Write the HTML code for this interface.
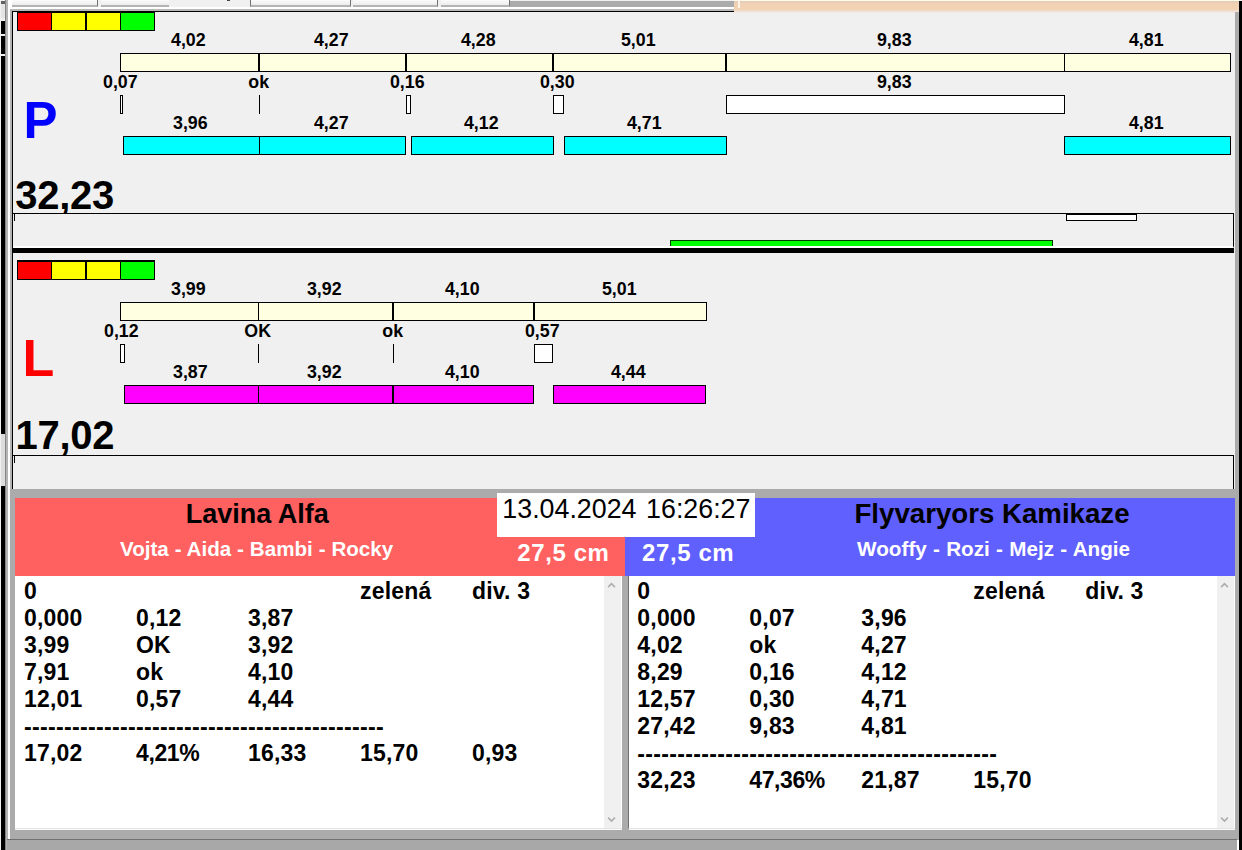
<!DOCTYPE html>
<html><head><meta charset="utf-8"><title>Flyball</title>
<style>
html,body{margin:0;padding:0;}
body{width:1242px;height:850px;overflow:hidden;background:#f0f0f0;position:relative;font-family:"Liberation Sans",sans-serif;}
#root{position:absolute;left:0;top:0;width:1242px;height:850px;overflow:hidden;background:#f0f0f0;}
#root div,#root span{position:absolute;box-sizing:border-box;}
</style></head><body><div id="root">

<div style="left:12px;top:0;width:86px;height:7px;background:linear-gradient(to bottom,#fbfbfb,#ececec);border-bottom:2px solid #b4b4b4;border-right:1px solid #707070;"></div>
<div style="left:101px;top:0;width:68px;height:7px;background:linear-gradient(to bottom,#fbfbfb,#ececec);border-bottom:2px solid #b4b4b4;"></div>
<div style="left:250px;top:0;width:101px;height:7px;background:linear-gradient(to bottom,#fbfbfb,#ececec);border-bottom:2px solid #b4b4b4;border-left:1px solid #707070;border-right:1px solid #707070;"></div>
<div style="left:353px;top:0;width:85px;height:7px;background:linear-gradient(to bottom,#fbfbfb,#ececec);border-bottom:2px solid #b4b4b4;border-right:1px solid #707070;"></div>
<div style="left:441px;top:0;width:69px;height:7px;background:linear-gradient(to bottom,#fbfbfb,#ececec);border-bottom:2px solid #b4b4b4;border-right:1px solid #707070;"></div>
<div style="left:227px;top:0;width:3px;height:1px;background:#404040"></div>
<div style="left:510px;top:1px;width:224px;height:6px;background:#ababab"></div>
<div style="left:12px;top:7px;width:722px;height:2px;background:#fff"></div>
<div style="left:12px;top:9px;width:722px;height:2px;background:#b8b8b8"></div>
<div style="left:12px;top:11px;width:722px;height:1px;background:#000"></div>
<div style="left:734px;top:0;width:505px;height:13px;background:linear-gradient(to bottom,#fffbea 0,#fffbea 1px,#e6ccb8 1px,#ebcfb6 3px,#f2d2b3 5px,#f2d2b3 9px,#f1dccb 11px,#f0f0f0 13px)"></div>
<div style="left:738px;top:0;width:2px;height:8px;background:#fdf3e6"></div>
<div style="left:1px;top:21px;width:4px;height:829px;background:#000"></div>
<div style="left:1px;top:1px;width:4px;height:3px;background:#606060"></div>
<div style="left:1px;top:4px;width:4px;height:14px;background:#e4e4e4"></div>
<div style="left:1px;top:434px;width:4px;height:52px;background:#dcdcdc"></div>
<div style="left:1px;top:34px;width:4px;height:2px;background:#f0f0f0"></div>
<div style="left:1px;top:54px;width:4px;height:2px;background:#f0f0f0"></div>
<div style="left:5px;top:0;width:3px;height:850px;background:#b4b4b4;border-left:1px solid #858585"></div>
<div style="left:8px;top:0;width:4px;height:850px;background:#fff"></div>
<div style="left:10px;top:9px;width:2px;height:480px;background:#b4b4b4"></div>
<div style="left:12px;top:11px;width:1px;height:478px;background:#000"></div>
<div style="left:1235px;top:12px;width:4px;height:838px;background:#ababab"></div>
<div style="left:1239px;top:1px;width:3px;height:849px;background:#000"></div>
<div style="left:17px;top:11px;width:35px;height:20px;background:#ff0000;border:1px solid #000;"></div>
<div style="left:17px;top:12px;width:35px;height:1px;background:#000"></div>
<div style="left:51px;top:11px;width:35px;height:20px;background:#ffff00;border:1px solid #000;"></div>
<div style="left:51px;top:12px;width:35px;height:1px;background:#000"></div>
<div style="left:86px;top:11px;width:35px;height:20px;background:#ffff00;border:1px solid #000;"></div>
<div style="left:86px;top:12px;width:35px;height:1px;background:#000"></div>
<div style="left:120px;top:11px;width:35px;height:20px;background:#00ff00;border:1px solid #000;"></div>
<div style="left:120px;top:12px;width:35px;height:1px;background:#000"></div>
<div style="left:120px;top:53px;width:139px;height:19px;background:#ffffe1;border:1px solid #000;"></div>
<span style="top:29.93px;font-size:17.8px;line-height:21px;font-weight:bold;color:#000;white-space:pre;left:-11.699999999999989px;width:400px;text-align:center;">4,02</span>
<div style="left:259px;top:53px;width:147px;height:19px;background:#ffffe1;border:1px solid #000;"></div>
<span style="top:29.93px;font-size:17.8px;line-height:21px;font-weight:bold;color:#000;white-space:pre;left:131.3px;width:400px;text-align:center;">4,27</span>
<div style="left:406px;top:53px;width:147px;height:19px;background:#ffffe1;border:1px solid #000;"></div>
<span style="top:29.93px;font-size:17.8px;line-height:21px;font-weight:bold;color:#000;white-space:pre;left:278.3px;width:400px;text-align:center;">4,28</span>
<div style="left:553px;top:53px;width:173px;height:19px;background:#ffffe1;border:1px solid #000;"></div>
<span style="top:29.93px;font-size:17.8px;line-height:21px;font-weight:bold;color:#000;white-space:pre;left:438.29999999999995px;width:400px;text-align:center;">5,01</span>
<div style="left:726px;top:53px;width:339px;height:19px;background:#ffffe1;border:1px solid #000;"></div>
<span style="top:29.93px;font-size:17.8px;line-height:21px;font-weight:bold;color:#000;white-space:pre;left:694.3px;width:400px;text-align:center;">9,83</span>
<div style="left:1064px;top:53px;width:167px;height:19px;background:#ffffe1;border:1px solid #000;"></div>
<span style="top:29.93px;font-size:17.8px;line-height:21px;font-weight:bold;color:#000;white-space:pre;left:946.3px;width:400px;text-align:center;">4,81</span>
<div style="left:120px;top:95px;width:3px;height:19px;background:#fff;border:1px solid #000;"></div>
<span style="top:71.93px;font-size:17.8px;line-height:21px;font-weight:bold;color:#000;white-space:pre;left:-79.7px;width:400px;text-align:center;">0,07</span>
<div style="left:259px;top:95px;width:1px;height:19px;background:#000"></div>
<span style="top:71.93px;font-size:17.8px;line-height:21px;font-weight:bold;color:#000;white-space:pre;left:58.69999999999999px;width:400px;text-align:center;">ok</span>
<div style="left:406px;top:95px;width:5px;height:19px;background:#fff;border:1px solid #000;"></div>
<span style="top:71.93px;font-size:17.8px;line-height:21px;font-weight:bold;color:#000;white-space:pre;left:207.3px;width:400px;text-align:center;">0,16</span>
<div style="left:553px;top:95px;width:11px;height:19px;background:#fff;border:1px solid #000;"></div>
<span style="top:71.93px;font-size:17.8px;line-height:21px;font-weight:bold;color:#000;white-space:pre;left:357.29999999999995px;width:400px;text-align:center;">0,30</span>
<div style="left:726px;top:95px;width:339px;height:19px;background:#fff;border:1px solid #000;"></div>
<span style="top:71.93px;font-size:17.8px;line-height:21px;font-weight:bold;color:#000;white-space:pre;left:694.3px;width:400px;text-align:center;">9,83</span>
<div style="left:123px;top:136px;width:137px;height:19px;background:#00ffff;border:1px solid #000;"></div>
<span style="top:112.93px;font-size:17.8px;line-height:21px;font-weight:bold;color:#000;white-space:pre;left:-9.699999999999989px;width:400px;text-align:center;">3,96</span>
<div style="left:259px;top:136px;width:147px;height:19px;background:#00ffff;border:1px solid #000;"></div>
<span style="top:112.93px;font-size:17.8px;line-height:21px;font-weight:bold;color:#000;white-space:pre;left:131.3px;width:400px;text-align:center;">4,27</span>
<div style="left:411px;top:136px;width:143px;height:19px;background:#00ffff;border:1px solid #000;"></div>
<span style="top:112.93px;font-size:17.8px;line-height:21px;font-weight:bold;color:#000;white-space:pre;left:281.3px;width:400px;text-align:center;">4,12</span>
<div style="left:564px;top:136px;width:163px;height:19px;background:#00ffff;border:1px solid #000;"></div>
<span style="top:112.93px;font-size:17.8px;line-height:21px;font-weight:bold;color:#000;white-space:pre;left:444.29999999999995px;width:400px;text-align:center;">4,71</span>
<div style="left:1064px;top:136px;width:167px;height:19px;background:#00ffff;border:1px solid #000;"></div>
<span style="top:112.93px;font-size:17.8px;line-height:21px;font-weight:bold;color:#000;white-space:pre;left:946.3px;width:400px;text-align:center;">4,81</span>
<span style="top:89.52px;font-size:51px;line-height:61px;font-weight:bold;color:#0000ff;white-space:pre;left:23.5px;">P</span>
<span style="top:170.93px;font-size:40px;line-height:48px;font-weight:bold;color:#000;white-space:pre;letter-spacing:-0.3px;left:15.3px;">32,23</span>
<div style="left:13px;top:213px;width:1221px;height:35px;background:#f0f0f0;border-top:1px solid #000;border-right:1px solid #000;border-bottom:2px solid #fff"></div>
<div style="left:14px;top:213px;width:1px;height:8px;background:#000"></div>
<div style="left:1066px;top:213px;width:71px;height:8px;background:#fff;border:1px solid #000;"></div>
<div style="left:1066px;top:214px;width:71px;height:1px;background:#000"></div>
<div style="left:670px;top:240px;width:383px;height:6px;background:#00ff00;border-top:1px solid #003800;border-left:1px solid #003800;border-right:1px solid #003800"></div>
<div style="left:13px;top:248px;width:1221px;height:5px;background:#000"></div>
<div style="left:17px;top:260px;width:35px;height:20px;background:#ff0000;border:1px solid #000;"></div>
<div style="left:17px;top:261px;width:35px;height:1px;background:#000"></div>
<div style="left:51px;top:260px;width:35px;height:20px;background:#ffff00;border:1px solid #000;"></div>
<div style="left:51px;top:261px;width:35px;height:1px;background:#000"></div>
<div style="left:86px;top:260px;width:35px;height:20px;background:#ffff00;border:1px solid #000;"></div>
<div style="left:86px;top:261px;width:35px;height:1px;background:#000"></div>
<div style="left:120px;top:260px;width:35px;height:20px;background:#00ff00;border:1px solid #000;"></div>
<div style="left:120px;top:261px;width:35px;height:1px;background:#000"></div>
<div style="left:120px;top:302px;width:139px;height:19px;background:#ffffe1;border:1px solid #000;"></div>
<span style="top:278.93px;font-size:17.8px;line-height:21px;font-weight:bold;color:#000;white-space:pre;left:-11.699999999999989px;width:400px;text-align:center;">3,99</span>
<div style="left:258px;top:302px;width:135px;height:19px;background:#ffffe1;border:1px solid #000;"></div>
<span style="top:278.93px;font-size:17.8px;line-height:21px;font-weight:bold;color:#000;white-space:pre;left:124.30000000000001px;width:400px;text-align:center;">3,92</span>
<div style="left:393px;top:302px;width:141px;height:19px;background:#ffffe1;border:1px solid #000;"></div>
<span style="top:278.93px;font-size:17.8px;line-height:21px;font-weight:bold;color:#000;white-space:pre;left:262.3px;width:400px;text-align:center;">4,10</span>
<div style="left:534px;top:302px;width:173px;height:19px;background:#ffffe1;border:1px solid #000;"></div>
<span style="top:278.93px;font-size:17.8px;line-height:21px;font-weight:bold;color:#000;white-space:pre;left:419.29999999999995px;width:400px;text-align:center;">5,01</span>
<div style="left:120px;top:344px;width:5px;height:19px;background:#fff;border:1px solid #000;"></div>
<span style="top:320.93px;font-size:17.8px;line-height:21px;font-weight:bold;color:#000;white-space:pre;left:-78.7px;width:400px;text-align:center;">0,12</span>
<div style="left:258px;top:344px;width:1px;height:19px;background:#000"></div>
<span style="top:320.93px;font-size:17.8px;line-height:21px;font-weight:bold;color:#000;white-space:pre;left:57.69999999999999px;width:400px;text-align:center;">OK</span>
<div style="left:393px;top:344px;width:1px;height:19px;background:#000"></div>
<span style="top:320.93px;font-size:17.8px;line-height:21px;font-weight:bold;color:#000;white-space:pre;left:192.7px;width:400px;text-align:center;">ok</span>
<div style="left:534px;top:344px;width:19px;height:19px;background:#fff;border:1px solid #000;"></div>
<span style="top:320.93px;font-size:17.8px;line-height:21px;font-weight:bold;color:#000;white-space:pre;left:342.29999999999995px;width:400px;text-align:center;">0,57</span>
<div style="left:124px;top:385px;width:135px;height:19px;background:#ff00ff;border:1px solid #000;"></div>
<span style="top:361.93px;font-size:17.8px;line-height:21px;font-weight:bold;color:#000;white-space:pre;left:-9.699999999999989px;width:400px;text-align:center;">3,87</span>
<div style="left:258px;top:385px;width:135px;height:19px;background:#ff00ff;border:1px solid #000;"></div>
<span style="top:361.93px;font-size:17.8px;line-height:21px;font-weight:bold;color:#000;white-space:pre;left:124.30000000000001px;width:400px;text-align:center;">3,92</span>
<div style="left:393px;top:385px;width:141px;height:19px;background:#ff00ff;border:1px solid #000;"></div>
<span style="top:361.93px;font-size:17.8px;line-height:21px;font-weight:bold;color:#000;white-space:pre;left:262.3px;width:400px;text-align:center;">4,10</span>
<div style="left:553px;top:385px;width:153px;height:19px;background:#ff00ff;border:1px solid #000;"></div>
<span style="top:361.93px;font-size:17.8px;line-height:21px;font-weight:bold;color:#000;white-space:pre;left:428.29999999999995px;width:400px;text-align:center;">4,44</span>
<span style="top:326.97px;font-size:52px;line-height:62px;font-weight:bold;color:#ff0000;white-space:pre;left:22.5px;">L</span>
<span style="top:410.93px;font-size:40px;line-height:48px;font-weight:bold;color:#000;white-space:pre;letter-spacing:-0.3px;left:15.5px;">17,02</span>
<div style="left:13px;top:455px;width:1221px;height:34px;background:#f0f0f0;border-top:1px solid #000;border-right:1px solid #000"></div>
<div style="left:14px;top:455px;width:1px;height:8px;background:#000"></div>
<div style="left:10px;top:489px;width:1225px;height:361px;background:#ababab"></div>
<div style="left:15px;top:498px;width:610px;height:78px;background:#ff6060"></div>
<div style="left:625px;top:498px;width:610px;height:78px;background:#6060ff"></div>
<span style="top:497.94px;font-size:27px;line-height:32px;font-weight:bold;color:#000;white-space:pre;left:57.19999999999999px;width:400px;text-align:center;">Lavina Alfa</span>
<span style="top:535.86px;font-size:20.6px;line-height:25px;font-weight:bold;color:#fff;white-space:pre;word-spacing:0.15px;left:56.60000000000002px;width:400px;text-align:center;">Vojta - Aida - Bambi - Rocky</span>
<span style="top:497.21px;font-size:27.65px;line-height:33px;font-weight:bold;color:#000;white-space:pre;left:792px;width:400px;text-align:center;">Flyvaryors Kamikaze</span>
<span style="top:535.82px;font-size:20.7px;line-height:25px;font-weight:bold;color:#fff;white-space:pre;word-spacing:0.5px;left:793.6px;width:400px;text-align:center;">Wooffy - Rozi - Mejz - Angie</span>
<div style="left:497px;top:493px;width:258px;height:44px;background:#fff"></div>
<span style="top:493.01px;font-size:26.8px;line-height:32px;font-weight:normal;color:#000;white-space:pre;word-spacing:2.2px;left:426.4px;width:400px;text-align:center;">13.04.2024 16:26:27</span>
<span style="top:538.18px;font-size:24px;line-height:29px;font-weight:bold;color:#fff;white-space:pre;letter-spacing:0.6px;left:517.3px;">27,5 cm</span>
<span style="top:538.18px;font-size:24px;line-height:29px;font-weight:bold;color:#fff;white-space:pre;letter-spacing:0.6px;left:642px;">27,5 cm</span>
<div style="left:15px;top:576px;width:606px;height:252px;background:#fff"></div>
<span style="top:576.53px;font-size:23px;line-height:28px;font-weight:bold;color:#000;white-space:pre;letter-spacing:0.2px;left:24px;">0</span>
<span style="top:576.53px;font-size:23px;line-height:28px;font-weight:bold;color:#000;white-space:pre;letter-spacing:0.2px;left:360px;">zelená</span>
<span style="top:576.53px;font-size:23px;line-height:28px;font-weight:bold;color:#000;white-space:pre;letter-spacing:0.2px;left:472px;">div. 3</span>
<span style="top:603.53px;font-size:23px;line-height:28px;font-weight:bold;color:#000;white-space:pre;letter-spacing:0.2px;left:24px;">0,000</span>
<span style="top:603.53px;font-size:23px;line-height:28px;font-weight:bold;color:#000;white-space:pre;letter-spacing:0.2px;left:136px;">0,12</span>
<span style="top:603.53px;font-size:23px;line-height:28px;font-weight:bold;color:#000;white-space:pre;letter-spacing:0.2px;left:248px;">3,87</span>
<span style="top:630.53px;font-size:23px;line-height:28px;font-weight:bold;color:#000;white-space:pre;letter-spacing:0.2px;left:24px;">3,99</span>
<span style="top:630.53px;font-size:23px;line-height:28px;font-weight:bold;color:#000;white-space:pre;letter-spacing:0.2px;left:136px;">OK</span>
<span style="top:630.53px;font-size:23px;line-height:28px;font-weight:bold;color:#000;white-space:pre;letter-spacing:0.2px;left:248px;">3,92</span>
<span style="top:657.53px;font-size:23px;line-height:28px;font-weight:bold;color:#000;white-space:pre;letter-spacing:0.2px;left:24px;">7,91</span>
<span style="top:657.53px;font-size:23px;line-height:28px;font-weight:bold;color:#000;white-space:pre;letter-spacing:0.2px;left:136px;">ok</span>
<span style="top:657.53px;font-size:23px;line-height:28px;font-weight:bold;color:#000;white-space:pre;letter-spacing:0.2px;left:248px;">4,10</span>
<span style="top:684.53px;font-size:23px;line-height:28px;font-weight:bold;color:#000;white-space:pre;letter-spacing:0.2px;left:24px;">12,01</span>
<span style="top:684.53px;font-size:23px;line-height:28px;font-weight:bold;color:#000;white-space:pre;letter-spacing:0.2px;left:136px;">0,57</span>
<span style="top:684.53px;font-size:23px;line-height:28px;font-weight:bold;color:#000;white-space:pre;letter-spacing:0.2px;left:248px;">4,44</span>
<span style="top:712.73px;font-size:23px;line-height:28px;font-weight:bold;color:#000;white-space:pre;letter-spacing:0.34px;left:24px;">---------------------------------------------</span>
<span style="top:738.53px;font-size:23px;line-height:28px;font-weight:bold;color:#000;white-space:pre;letter-spacing:0.2px;left:24px;">17,02</span>
<span style="top:738.53px;font-size:23px;line-height:28px;font-weight:bold;color:#000;white-space:pre;letter-spacing:-0.4px;left:136px;">4,21%</span>
<span style="top:738.53px;font-size:23px;line-height:28px;font-weight:bold;color:#000;white-space:pre;letter-spacing:0.2px;left:248px;">16,33</span>
<span style="top:738.53px;font-size:23px;line-height:28px;font-weight:bold;color:#000;white-space:pre;letter-spacing:0.2px;left:360px;">15,70</span>
<span style="top:738.53px;font-size:23px;line-height:28px;font-weight:bold;color:#000;white-space:pre;letter-spacing:0.2px;left:472px;">0,93</span>
<div style="left:604px;top:576px;width:17px;height:252px;background:#f0f0f0"></div>
<svg style="position:absolute;left:607px;top:581px" width="9" height="8" viewBox="0 0 9 8"><path d="M1.1 6.1 L4.5 2.6 L7.9 6.1" fill="none" stroke="#adadad" stroke-width="1.6"/></svg>
<svg style="position:absolute;left:607px;top:815px" width="9" height="8" viewBox="0 0 9 8"><path d="M1.1 2.6 L4.5 6.1 L7.9 2.6" fill="none" stroke="#adadad" stroke-width="1.6"/></svg>
<div style="left:629px;top:576px;width:605px;height:252px;background:#fff"></div>
<span style="top:576.53px;font-size:23px;line-height:28px;font-weight:bold;color:#000;white-space:pre;letter-spacing:0.2px;left:637.3px;">0</span>
<span style="top:576.53px;font-size:23px;line-height:28px;font-weight:bold;color:#000;white-space:pre;letter-spacing:0.2px;left:973.3px;">zelená</span>
<span style="top:576.53px;font-size:23px;line-height:28px;font-weight:bold;color:#000;white-space:pre;letter-spacing:0.2px;left:1085.3px;">div. 3</span>
<span style="top:603.53px;font-size:23px;line-height:28px;font-weight:bold;color:#000;white-space:pre;letter-spacing:0.2px;left:637.3px;">0,000</span>
<span style="top:603.53px;font-size:23px;line-height:28px;font-weight:bold;color:#000;white-space:pre;letter-spacing:0.2px;left:749.3px;">0,07</span>
<span style="top:603.53px;font-size:23px;line-height:28px;font-weight:bold;color:#000;white-space:pre;letter-spacing:0.2px;left:861.3px;">3,96</span>
<span style="top:630.53px;font-size:23px;line-height:28px;font-weight:bold;color:#000;white-space:pre;letter-spacing:0.2px;left:637.3px;">4,02</span>
<span style="top:630.53px;font-size:23px;line-height:28px;font-weight:bold;color:#000;white-space:pre;letter-spacing:0.2px;left:749.3px;">ok</span>
<span style="top:630.53px;font-size:23px;line-height:28px;font-weight:bold;color:#000;white-space:pre;letter-spacing:0.2px;left:861.3px;">4,27</span>
<span style="top:657.53px;font-size:23px;line-height:28px;font-weight:bold;color:#000;white-space:pre;letter-spacing:0.2px;left:637.3px;">8,29</span>
<span style="top:657.53px;font-size:23px;line-height:28px;font-weight:bold;color:#000;white-space:pre;letter-spacing:0.2px;left:749.3px;">0,16</span>
<span style="top:657.53px;font-size:23px;line-height:28px;font-weight:bold;color:#000;white-space:pre;letter-spacing:0.2px;left:861.3px;">4,12</span>
<span style="top:684.53px;font-size:23px;line-height:28px;font-weight:bold;color:#000;white-space:pre;letter-spacing:0.2px;left:637.3px;">12,57</span>
<span style="top:684.53px;font-size:23px;line-height:28px;font-weight:bold;color:#000;white-space:pre;letter-spacing:0.2px;left:749.3px;">0,30</span>
<span style="top:684.53px;font-size:23px;line-height:28px;font-weight:bold;color:#000;white-space:pre;letter-spacing:0.2px;left:861.3px;">4,71</span>
<span style="top:711.53px;font-size:23px;line-height:28px;font-weight:bold;color:#000;white-space:pre;letter-spacing:0.2px;left:637.3px;">27,42</span>
<span style="top:711.53px;font-size:23px;line-height:28px;font-weight:bold;color:#000;white-space:pre;letter-spacing:0.2px;left:749.3px;">9,83</span>
<span style="top:711.53px;font-size:23px;line-height:28px;font-weight:bold;color:#000;white-space:pre;letter-spacing:0.2px;left:861.3px;">4,81</span>
<span style="top:739.73px;font-size:23px;line-height:28px;font-weight:bold;color:#000;white-space:pre;letter-spacing:0.34px;left:637.3px;">---------------------------------------------</span>
<span style="top:765.53px;font-size:23px;line-height:28px;font-weight:bold;color:#000;white-space:pre;letter-spacing:0.2px;left:637.3px;">32,23</span>
<span style="top:765.53px;font-size:23px;line-height:28px;font-weight:bold;color:#000;white-space:pre;letter-spacing:-0.4px;left:749.3px;">47,36%</span>
<span style="top:765.53px;font-size:23px;line-height:28px;font-weight:bold;color:#000;white-space:pre;letter-spacing:0.2px;left:861.3px;">21,87</span>
<span style="top:765.53px;font-size:23px;line-height:28px;font-weight:bold;color:#000;white-space:pre;letter-spacing:0.2px;left:973.3px;">15,70</span>
<div style="left:1217px;top:576px;width:17px;height:252px;background:#f0f0f0"></div>
<svg style="position:absolute;left:1220px;top:581px" width="9" height="8" viewBox="0 0 9 8"><path d="M1.1 6.1 L4.5 2.6 L7.9 6.1" fill="none" stroke="#adadad" stroke-width="1.6"/></svg>
<svg style="position:absolute;left:1220px;top:815px" width="9" height="8" viewBox="0 0 9 8"><path d="M1.1 2.6 L4.5 6.1 L7.9 2.6" fill="none" stroke="#adadad" stroke-width="1.6"/></svg>
<div style="left:621px;top:576px;width:1px;height:252px;background:#fff"></div>
<div style="left:628px;top:576px;width:1px;height:252px;background:#707070"></div>
<div style="left:1234px;top:576px;width:1px;height:252px;background:#fff"></div>
<div style="left:15px;top:828px;width:607px;height:2px;background:#fafafa;border-top:1px solid #e4e4e4"></div>
<div style="left:629px;top:828px;width:606px;height:2px;background:#fafafa;border-top:1px solid #e4e4e4"></div>
<div style="left:7px;top:839px;width:1230px;height:1px;background:#707070"></div>
<div style="left:7px;top:840px;width:1230px;height:10px;background:#a8a8a8"></div>
<div style="left:1237px;top:840px;width:2px;height:10px;background:#fff"></div>
</div></body></html>
